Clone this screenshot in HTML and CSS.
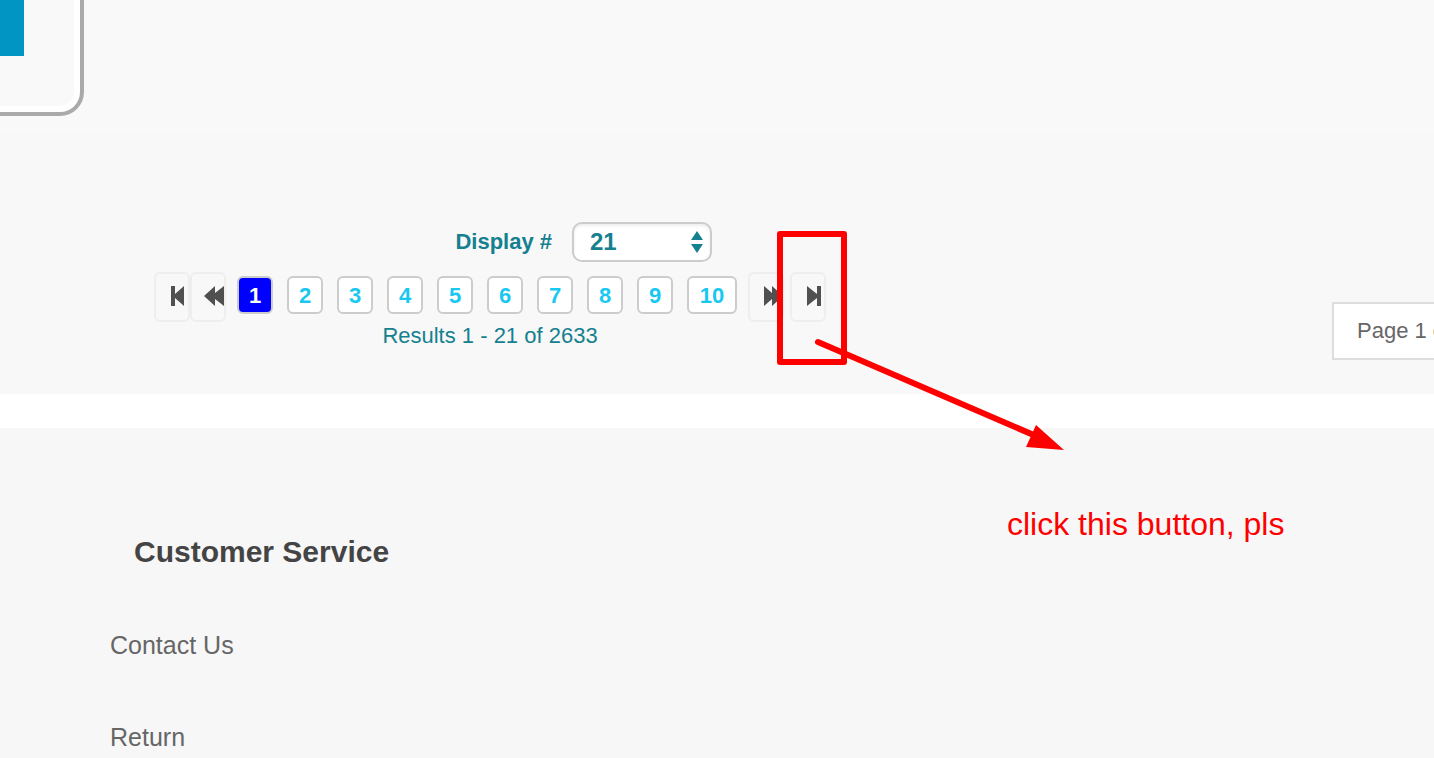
FILE: index.html
```
<!DOCTYPE html>
<html lang="en">
<head>
<meta charset="utf-8">
<title>Products</title>
<link rel="stylesheet" href="styles.css">
</head>
<body>
<main>
  <section class="products">
    <div class="card"><div class="card-inner"><div class="card-image"></div></div></div>
  </section>
  <section class="pagination">
    <div class="pager">
      <form class="display">
        <label for="limit">Display #</label>
        <span class="select-wrap">
          <select id="limit" class="select"><option>21</option></select>
          <svg class="select-arrows" width="12" height="22" viewBox="0 0 12 22" aria-hidden="true"><path d="M6 0l6 9H0zM6 22l6-9H0z" fill="#15808f"/></svg>
        </span>
      </form>
      <nav class="pages" aria-label="Pages">
        <div class="page-group steps-back">
          <button class="step" aria-label="First page"><svg width="14" height="22" viewBox="0 0 14 22"><path d="M0 1h4v8l9-8v20l-9-8v8H0z" fill="#505050"/></svg></button>
          <button class="step" aria-label="Previous page"><svg width="20" height="22" viewBox="0 0 20 22"><path d="M0 11L11 1v7l9-7v20l-9-7v7z" fill="#505050"/></svg></button>
        </div>
        <div class="page-group numbers">
          <button class="page current" aria-current="page">1</button>
          <button class="page">2</button>
          <button class="page">3</button>
          <button class="page">4</button>
          <button class="page">5</button>
          <button class="page">6</button>
          <button class="page">7</button>
          <button class="page">8</button>
          <button class="page">9</button>
          <button class="page wide">10</button>
        </div>
        <div class="page-group steps-next">
          <button class="step" aria-label="Next page"><svg width="20" height="22" viewBox="0 0 20 22"><path d="M1 1l8 7V1l11 10L9 21v-7l-8 7z" fill="#505050"/></svg></button>
          <button class="step" aria-label="Last page"><svg width="14" height="22" viewBox="0 0 14 22"><path d="M0 1l10 8V1h4v20h-4v-8L0 21z" fill="#505050"/></svg></button>
        </div>
      </nav>
      <p class="results">Results 1 - 21 of 2633</p>
    </div>
    <div class="page-count">Page 1 of</div>
  </section>
  <footer class="footer">
    <h2>Customer Service</h2>
    <ul>
      <li><a href="#">Contact Us</a></li>
      <li><a href="#">Return</a></li>
    </ul>
  </footer>
</main>
<svg class="markup" width="300" height="230" viewBox="0 0 300 230" aria-hidden="true">
  <rect x="7" y="7" width="64" height="128" fill="none" stroke="#f00" stroke-width="6" stroke-linejoin="round"/>
  <path d="M45 115L263 209" stroke="#f00" stroke-width="6" stroke-linecap="round"/>
  <path d="M263 198l28 25-38-3z" fill="#f00"/>
</svg>
<p class="note">click this button, pls</p>
</body>
</html>
```
FILE: styles.css
```
* {
  box-sizing: border-box;
}

body {
  position: relative;
  margin: 0;
  min-height: 100vh;
  overflow: hidden;
  background: #f7f7f7;
  font-family: "Liberation Sans", Arial, sans-serif;
  font-size: 22px;
}

main {
  display: flex;
  flex-direction: column;
  height: 100vh;
  overflow: hidden;
}

.products {
  flex: none;
  padding-bottom: 16px;
  background: #f9f9f9;
}

.card {
  width: 84px;
  padding: 0 6px 6px 0;
  border: solid #aaa;
  border-width: 0 4px 4px 0;
  border-radius: 0 0 24px 0;
  background: #fff;
}

.card-inner {
  height: 106px;
  border-radius: 0 0 14px 0;
  background: #f9f9f9;
}

.card-image {
  width: 24px;
  height: 56px;
  background: #0095c2;
}

.pagination {
  flex: none;
  display: flex;
  align-items: flex-end;
  justify-content: space-between;
  padding: 90px 0 34px 154px;
  border-bottom: 34px solid #fff;
  background: #f8f8f8;
}

.pager {
  color: #15808f;
}

.display {
  display: flex;
  align-items: center;
  justify-content: flex-end;
  gap: 20px;
  padding-right: 114px;
  font-weight: bold;
}

.select-wrap {
  position: relative;
  display: flex;
}

.select {
  width: 140px;
  height: 40px;
  padding: 0 16px 2px;
  appearance: none;
  border: 2px solid #ccc;
  border-radius: 10px;
  background: #fff;
  box-shadow: inset 0 2px 3px #eee;
  color: inherit;
  font: bold 24px "Liberation Sans", Arial, sans-serif;
}

.select-arrows {
  position: absolute;
  top: 9px;
  right: 9px;
  pointer-events: none;
}

.pages {
  display: flex;
  align-items: center;
  gap: 11px;
  margin-top: 10px;
}

.page-group {
  display: flex;
  align-items: center;
}

.numbers {
  gap: 14px;
  padding-bottom: 4px;
}

.steps-next {
  gap: 6px;
}

.step {
  display: flex;
  align-items: center;
  justify-content: flex-end;
  width: 36px;
  height: 50px;
  padding: 0 3px 2px 0;
  overflow: hidden;
  border: 2px solid #eee;
  border-radius: 6px;
  background: transparent;
}

.step svg {
  flex: none;
}

.steps-back .step + .step {
  padding-right: 0;
}

.steps-next .step:first-child {
  justify-content: flex-start;
  padding-left: 13px;
}

.page {
  width: 36px;
  height: 38px;
  padding: 2px 0 0;
  border: 2px solid #ccc;
  border-radius: 6px;
  background: #fff;
  color: #18c8f0;
  font: bold 22px "Liberation Sans", Arial, sans-serif;
}

.current {
  background: #00f;
  color: #fff;
}

.wide {
  width: 50px;
}

.results {
  margin: 0;
  padding-bottom: 10px;
  line-height: 28px;
  text-align: center;
}

.page-count {
  width: 102px;
  padding: 0 0 0 23px;
  border: 2px solid #ddd;
  border-right: 0;
  background: #fff;
  color: #666;
  line-height: 54px;
  white-space: nowrap;
}

.footer {
  flex: none;
  padding: 104px 110px 0;
}

.footer h2 {
  margin: 0 0 0 24px;
  color: #444;
  font-size: 30px;
  line-height: 40px;
}

.footer ul {
  display: grid;
  gap: 52px;
  margin: 54px 0 0;
  padding: 0;
  list-style: none;
  font-size: 25px;
  line-height: 38px;
}

.footer li {
  padding-bottom: 2px;
}

.footer a {
  color: #666;
  text-decoration: none;
}

.markup {
  position: absolute;
  top: 227px;
  left: 773px;
  pointer-events: none;
}

.note {
  position: absolute;
  top: 504px;
  left: 1007px;
  margin: 0;
  color: #f00;
  font-size: 32px;
  line-height: 40px;
}
```
